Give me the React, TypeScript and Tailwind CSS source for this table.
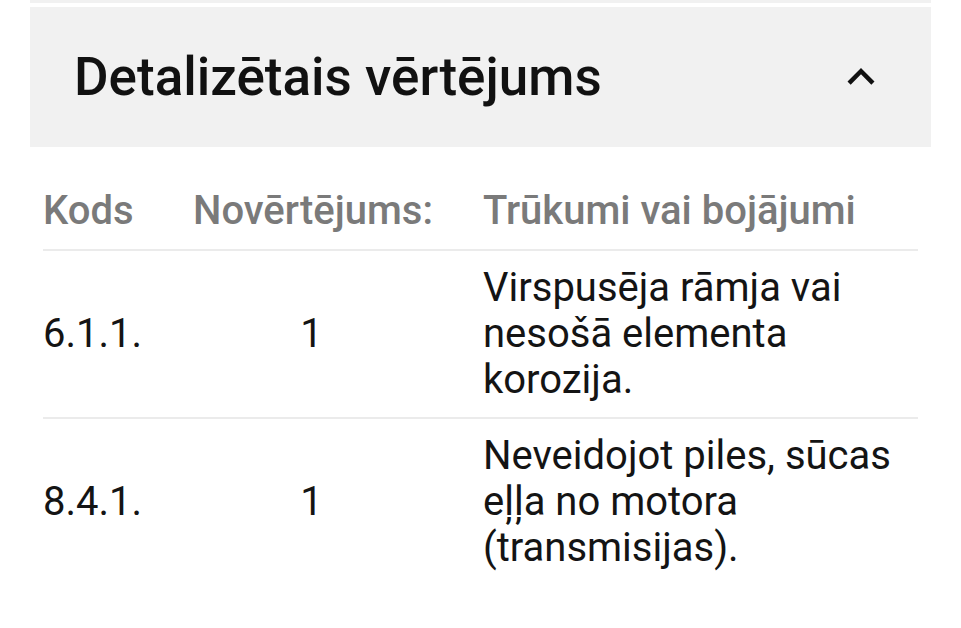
import React from "react";

const rows = [
  { code: "6.1.1.", score: "1", desc: "Virspusēja rāmja vai nesošā elementa korozija." },
  { code: "8.4.1.", score: "1", desc: "Neveidojot piles, sūcas eļļa no motora (transmisijas)." },
];

export default function App() {
  return (
    <div className="w-[961px] h-[628px] bg-white overflow-hidden font-['Roboto',sans-serif]">
      <div className="ml-[30px] w-[901px]">
        <div className="h-[3px] bg-[#f1f1f1]" />
        <div className="mt-[4px] h-[140px] bg-[#f1f1f1] flex items-center justify-between pl-[44px] pr-[43px]">
          <span className="text-[53px] font-medium text-[#111111] leading-none">Detalizētais vērtējums</span>
          <svg width="54" height="54" viewBox="0 0 24 24" fill="#111111">
            <path d="M12 8l-6 6 1.41 1.41L12 10.83l4.59 4.58L18 14z" />
          </svg>
        </div>
        <div className="ml-[13px] w-[875px]">
          <div className="grid grid-cols-[150px_290px_1fr] pt-[41px] pb-[15px] border-b-2 border-[#ebebeb] text-[40px] leading-[46px] font-medium text-[#7a7a7a]">
            <div>Kods</div>
            <div>Novērtējums:</div>
            <div>Trūkumi vai bojājumi</div>
          </div>
          {rows.map((r, i) => (
            <div
              key={r.code}
              className={
                "grid grid-cols-[150px_290px_1fr] items-center py-[14px] text-[40px] leading-[46px] text-[#141414] " +
                (i < rows.length - 1 ? "border-b-2 border-[#ebebeb]" : "")
              }
            >
              <div>{r.code}</div>
              <div className="w-[237px] text-center">{r.score}</div>
              <div>{r.desc}</div>
            </div>
          ))}
        </div>
      </div>
    </div>
  );
}
